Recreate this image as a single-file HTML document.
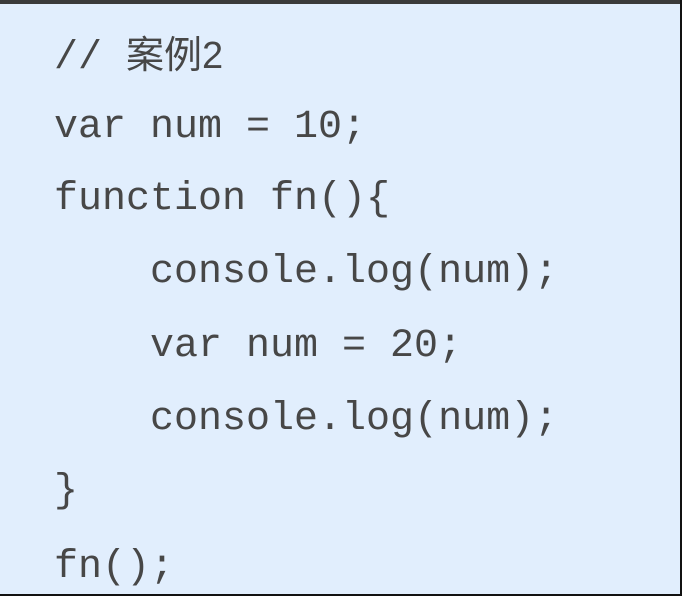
<!DOCTYPE html>
<html><head><meta charset="utf-8"><style>
html,body{margin:0;padding:0;width:682px;height:596px;overflow:hidden;background:#e1eefd;}
.top{position:absolute;left:0;top:0;width:682px;height:4px;background:#3a3a3a;}
.right{position:absolute;right:0;top:0;width:2px;height:596px;background:#111;}
.bot{position:absolute;left:0;bottom:0;width:682px;height:2px;background:#111;}
.l{position:absolute;left:54px;font-family:"Liberation Mono","Noto Sans CJK SC",monospace;font-size:40px;line-height:40px;color:#474747;white-space:pre;}
.c{font-family:"Liberation Sans","Noto Sans CJK SC",sans-serif;font-size:38px;}
</style></head><body>
<div class="top"></div><div class="right"></div><div class="bot"></div>
<div class="l" style="top:36px">// <span class="c">案例2</span></div>
<div class="l" style="top:108px">var num = 10;</div>
<div class="l" style="top:180px">function fn(){</div>
<div class="l" style="top:253px">    console.log(num);</div>
<div class="l" style="top:327px">    var num = 20;</div>
<div class="l" style="top:400px">    console.log(num);</div>
<div class="l" style="top:472px">}</div>
<div class="l" style="top:548px">fn();</div>
</body></html>
